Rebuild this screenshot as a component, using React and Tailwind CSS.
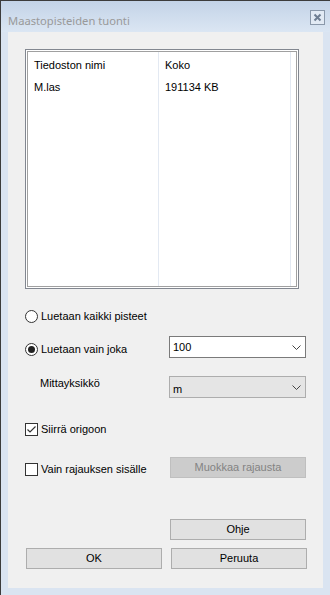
import React from "react";

function Chevron() {
  return (
    <svg width="9" height="5" viewBox="0 0 9 5" className="shrink-0">
      <path d="M0.5 0.5 L4.5 4.5 L8.5 0.5" fill="none" stroke="#444" strokeWidth="1" />
    </svg>
  );
}

function Radio({ checked }) {
  return (
    <span className="w-[13px] h-[13px] rounded-full border border-[#333] bg-white flex items-center justify-center shrink-0">
      {checked && <span className="w-[7px] h-[7px] rounded-full bg-[#222]" />}
    </span>
  );
}

function Check({ checked }) {
  return (
    <span className="w-[13px] h-[13px] border border-[#333] bg-white flex items-center justify-center shrink-0">
      {checked && (
        <svg width="11" height="11" viewBox="0 0 11 11">
          <path d="M1.5 5.5 L4 8 L9.5 2.5" fill="none" stroke="#333" strokeWidth="1.2" />
        </svg>
      )}
    </span>
  );
}

function Button({ children, disabled, className = "" }) {
  return (
    <div
      className={`h-[21px] w-[136px] border flex items-center justify-center ${
        disabled
          ? "bg-[#cccccc] border-[#bfbfbf] text-[#838383]"
          : "bg-[#e1e1e1] border-[#adadad] text-black"
      } ${className}`}
    >
      {children}
    </div>
  );
}

export default function App() {
  return (
    <div className="w-[330px] h-[595px] border-l border-t border-[#3c3c3c] bg-[#dae4f1] flex flex-col font-['Liberation_Sans',Arial,sans-serif] text-[11px] leading-[13px] text-black overflow-hidden">
      {/* title bar */}
      <div className="h-[31px] shrink-0 bg-gradient-to-b from-[#c3d3e7] to-[#dbe6f3] flex items-start justify-between pl-[7px] pr-[5px]">
        <span className="mt-[12px] font-['Noto_Sans',sans-serif] text-[11.2px] leading-[16px] text-[#999999]">
          Maastopisteiden tuonti
        </span>
        <div className="mt-[9px] w-[15px] h-[15px] border border-[#8a98aa] bg-[#e2eaf4] flex items-center justify-center">
          <svg width="9" height="9" viewBox="0 0 9 9">
            <path d="M1.5 1.5 L7.5 7.5 M7.5 1.5 L1.5 7.5" stroke="#6f7e92" strokeWidth="2" />
          </svg>
        </div>
      </div>

      {/* client area */}
      <div className="mx-[7px] h-[556px] shrink-0 bg-[#f0f0f0] flex flex-col pl-[17px]">
        {/* list view */}
        <div className="mt-[17px] w-[274px] h-[240px] border border-[#828790] bg-white p-px">
          <div className="w-full h-full border border-[#a0a0a0] relative flex">
            <div className="w-[131px] h-full border-r border-[#e3e9f2] pl-[6px]">
              <div className="h-[22px] pt-[7px]">Tiedoston nimi</div>
              <div className="pt-[7px]">M.las</div>
            </div>
            <div className="w-[132px] h-full border-r border-[#e3e9f2] pl-[6px]">
              <div className="h-[22px] pt-[7px]">Koko</div>
              <div className="pt-[7px]">191134 KB</div>
            </div>
          </div>
        </div>

        {/* radio 1 */}
        <div className="mt-[21px] h-[13px] flex items-center gap-[3px]">
          <Radio />
          <span>Luetaan kaikki pisteet</span>
        </div>

        {/* radio 2 + combo */}
        <div className="mt-[13px] h-[22px] flex items-start">
          <div className="w-[144px] mt-[7px] flex items-center gap-[3px]">
            <Radio checked />
            <span>Luetaan vain joka</span>
          </div>
          <div className="w-[137px] h-[22px] border border-[#7a7a7a] bg-white flex items-center justify-between pl-[3px] pr-[4px]">
            <span>100</span>
            <Chevron />
          </div>
        </div>

        {/* unit */}
        <div className="mt-[18px] h-[22px] flex items-start">
          <div className="w-[144px] pl-[15px] pt-[1px]">Mittayksikkö</div>
          <div className="w-[137px] h-[22px] border border-[#adadad] bg-[#e5e5e5] flex items-center justify-between pl-[3px] pr-[4px]">
            <span className="pt-[4px]">m</span>
            <Chevron />
          </div>
        </div>

        {/* checkbox 1 */}
        <div className="mt-[25px] h-[13px] flex items-center gap-[3px]">
          <Check checked />
          <span>Siirrä origoon</span>
        </div>

        {/* checkbox 2 + button */}
        <div className="mt-[21px] h-[21px] flex items-start">
          <div className="w-[145px] mt-[6px] flex items-center gap-[3px]">
            <Check />
            <span>Vain rajauksen sisälle</span>
          </div>
          <Button disabled>Muokkaa rajausta</Button>
        </div>

        {/* help */}
        <div className="mt-[41px] flex">
          <Button className="ml-[145px]">Ohje</Button>
        </div>

        {/* ok / cancel */}
        <div className="mt-[8px] flex gap-[9px] pl-px">
          <Button>OK</Button>
          <Button>Peruuta</Button>
        </div>
      </div>
    </div>
  );
}
